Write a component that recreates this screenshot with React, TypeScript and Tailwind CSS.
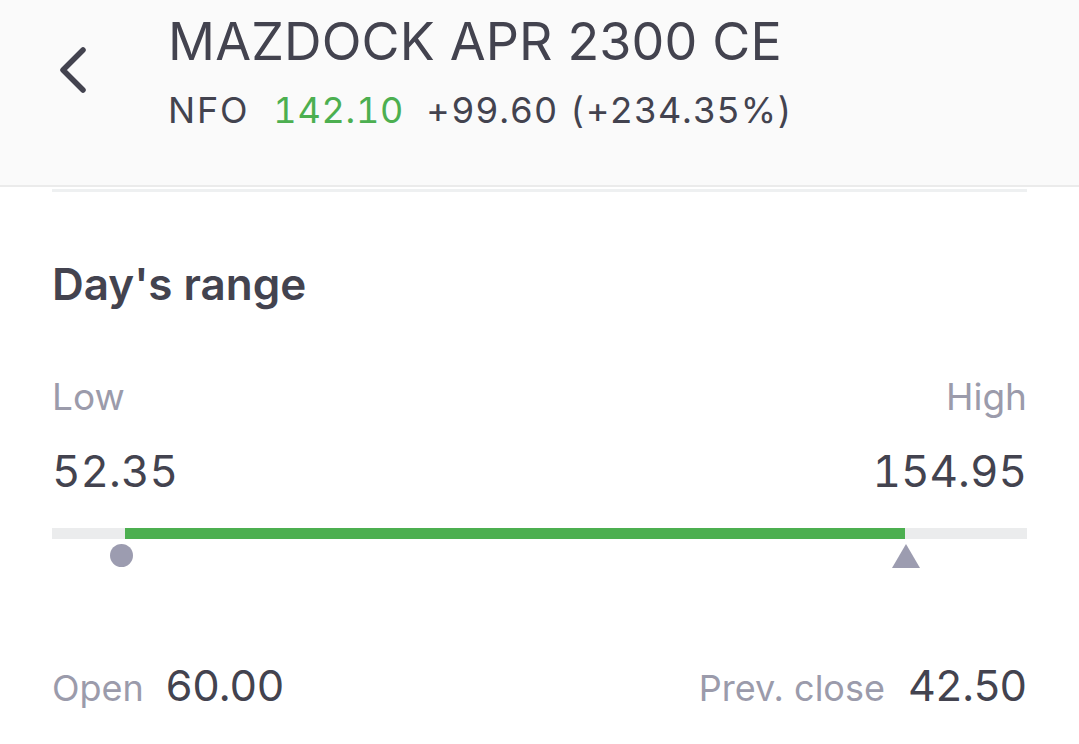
export default function App() {
  return (
    <div className="w-[1079px] h-[744px] overflow-hidden bg-white font-['Inter',sans-serif] text-[#43434f]">
      {/* Header */}
      <header className="flex h-[187px] border-b-2 border-[#ebebeb] bg-[#fafafa]">
        <div className="w-[168px] pl-[55px] pt-[40px]">
          <svg width="36" height="60" viewBox="0 0 36 60" fill="none">
            <path d="M28 10 L8 30 L28 50" stroke="#43434f" strokeWidth="5.5" strokeLinecap="round" strokeLinejoin="round" />
          </svg>
        </div>
        <div className="pt-[16px]">
          <h1 className="text-[52px] leading-none font-normal tracking-[0.003em]">MAZDOCK APR 2300 CE</h1>
          <div className="mt-[24px] flex text-[36px] leading-none tracking-[0.05em]">
            <span>NFO</span>
            <span className="ml-[24px] text-[#4caf50] tabular-nums tracking-[0.02em]">142.10</span>
            <span className="ml-[22px]">+99.60 (+234.35%)</span>
          </div>
        </div>
      </header>

      <div className="px-[52px]">
        <div className="mt-[2px] h-[3px] bg-[#eef0f1]" />

        <h2 className="mt-[70px] text-[44px] leading-none font-semibold">Day's range</h2>

        <div className="mt-[72px] flex justify-between text-[37px] leading-none text-[#9b9bab]">
          <span>Low</span>
          <span>High</span>
        </div>
        <div className="mt-[34px] flex justify-between text-[44px] leading-none tabular-nums">
          <span>52.35</span>
          <span>154.95</span>
        </div>

        {/* Range bar */}
        <div className="relative mt-[35px] h-[40px]">
          <div className="h-[11px] bg-[#ebeced]" />
          <div className="absolute left-[73px] top-0 h-[11px] w-[780px] bg-[#4caf50]" />
          <div className="absolute left-[58px] top-[16px] h-[23px] w-[23px] rounded-full bg-[#9c9cb0]" />
          <svg className="absolute left-[840px] top-[16px]" width="28" height="24" viewBox="0 0 28 24">
            <path d="M14 0 L28 24 L0 24 Z" fill="#9c9cb0" />
          </svg>
        </div>

        <div className="mt-[96px] flex items-baseline justify-between">
          <div className="flex items-baseline gap-[22px]">
            <span className="text-[36px] leading-none text-[#9b9bab]">Open</span>
            <span className="text-[43px] leading-none">60.00</span>
          </div>
          <div className="flex items-baseline gap-[23px]">
            <span className="text-[36px] leading-none text-[#9b9bab]">Prev. close</span>
            <span className="text-[43px] leading-none">42.50</span>
          </div>
        </div>
      </div>
    </div>
  );
}
